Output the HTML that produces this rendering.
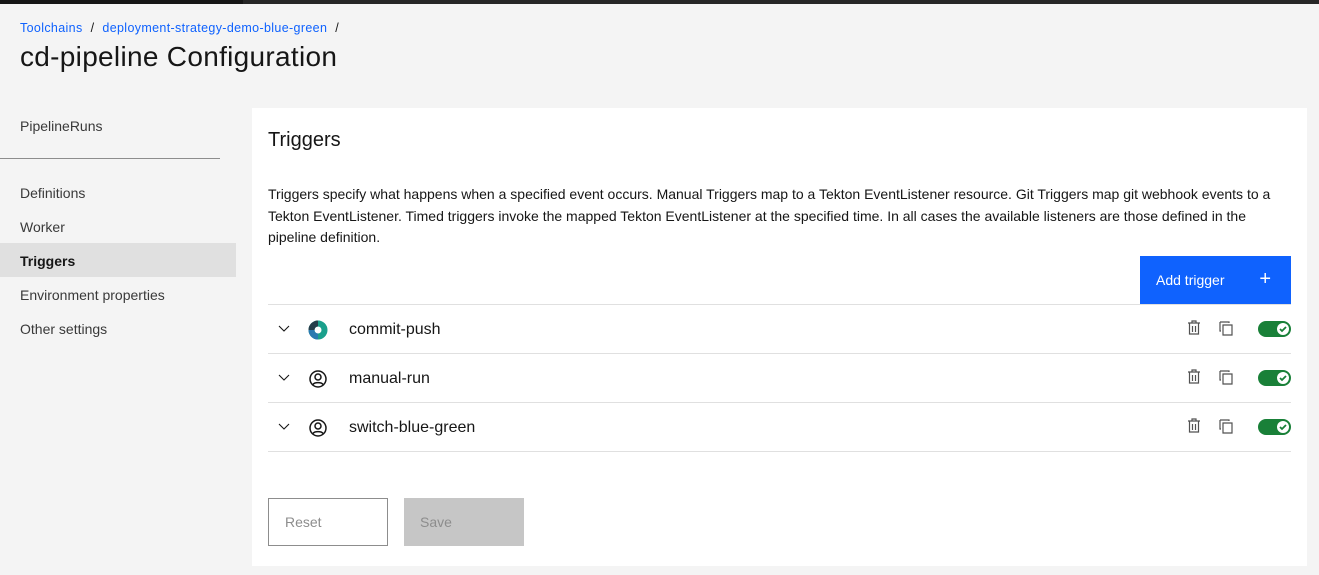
<!DOCTYPE html>
<html><head><style>
body{margin:0;width:1319px;height:575px;background:#f4f4f4;font-family:"Liberation Sans",sans-serif;color:#161616;position:relative;overflow:hidden}
.a{position:absolute}
.top{top:0;left:0;width:1319px;height:4px;background:#262626}
.top2{top:0;left:0;width:243px;height:4px;background:#161616}
.bc{top:21px;left:20px;font-size:12.5px;color:#0f62fe;letter-spacing:0.35px}
.bc span{color:#161616;margin:0 8px}
h1{position:absolute;top:41px;left:20px;margin:0;font-weight:400;font-size:28px;letter-spacing:0.3px}
.nav{left:20px;font-size:14px;color:#393939}
.panel{left:252px;top:108px;width:1055px;height:458px;background:#fff}
.row{left:268px;width:1023px;height:48px;border-top:1px solid #e0e0e0}
.row .n{position:absolute;left:81px;top:16px;font-size:16px}
</style></head><body>
<div class="a top"></div><div class="a top2"></div>
<div class="a bc">Toolchains<span>/</span>deployment-strategy-demo-blue-green<span>/</span></div>
<h1>cd-pipeline Configuration</h1>
<div class="a nav" style="top:118px">PipelineRuns</div>
<div class="a" style="top:158px;left:0;width:220px;height:1px;background:#8d8d8d"></div>
<div class="a nav" style="top:185px">Definitions</div>
<div class="a nav" style="top:219px">Worker</div>
<div class="a" style="top:243px;left:0;width:236px;height:34px;background:#e0e0e0"></div>
<div class="a nav" style="top:253px;font-weight:bold;color:#161616">Triggers</div>
<div class="a nav" style="top:287px">Environment properties</div>
<div class="a nav" style="top:321px">Other settings</div>
<div class="a panel"></div>
<div class="a" style="left:268px;top:129px;font-size:20px">Triggers</div>
<div class="a" style="left:268px;top:184px;width:1030px;font-size:14px;line-height:21.5px">Triggers specify what happens when a specified event occurs. Manual Triggers map to a Tekton EventListener resource. Git Triggers map git webhook events to a Tekton EventListener. Timed triggers invoke the mapped Tekton EventListener at the specified time. In all cases the available listeners are those defined in the pipeline definition.</div>
<div class="a" style="left:1140px;top:256px;width:151px;height:48px;background:#0f62fe;color:#fff;font-size:14px"><span style="position:absolute;left:16px;top:16px">Add trigger</span><span style="position:absolute;right:20px;top:12px;font-size:20px;font-weight:300">+</span></div>
<div class="a row" style="top:304px"><svg class="a" style="left:10px;top:20px" width="12" height="8"><path d="M1 1l5 5 5-5" stroke="#161616" fill="none" stroke-width="1.1"/></svg><svg class="a" style="left:40px;top:15px" width="20" height="20"><circle cx="10" cy="10" r="6.5" fill="none" stroke="#1aa08c" stroke-width="6"/><path d="M10 3.5a6.5 6.5 0 0 0-6.5 6.5" stroke="#263d4a" stroke-width="6" fill="none"/><path d="M3.5 10a6.5 6.5 0 0 0 6.5 6.5" stroke="#2a7ab0" stroke-width="6" fill="none"/></svg><span class="n">commit-push</span></div>
<div class="a row" style="top:353px"><svg class="a" style="left:10px;top:20px" width="12" height="8"><path d="M1 1l5 5 5-5" stroke="#161616" fill="none" stroke-width="1.1"/></svg><svg class="a" style="left:40px;top:15px" width="20" height="20"><circle cx="10" cy="10" r="8" fill="none" stroke="#161616" stroke-width="1.5"/><circle cx="10" cy="8" r="3" fill="none" stroke="#161616" stroke-width="1.5"/><path d="M5 15.5c1.5-2.5 8.5-2.5 10 0" stroke="#161616" fill="none" stroke-width="1.5"/></svg><span class="n">manual-run</span></div>
<div class="a row" style="top:402px;border-bottom:1px solid #e0e0e0"><svg class="a" style="left:10px;top:20px" width="12" height="8"><path d="M1 1l5 5 5-5" stroke="#161616" fill="none" stroke-width="1.1"/></svg><svg class="a" style="left:40px;top:15px" width="20" height="20"><circle cx="10" cy="10" r="8" fill="none" stroke="#161616" stroke-width="1.5"/><circle cx="10" cy="8" r="3" fill="none" stroke="#161616" stroke-width="1.5"/><path d="M5 15.5c1.5-2.5 8.5-2.5 10 0" stroke="#161616" fill="none" stroke-width="1.5"/></svg><span class="n">switch-blue-green</span></div>
<svg class="a" style="left:1186px;top:320px" width="110" height="120">
<g stroke="#525252" fill="none" stroke-width="1.2">
<path d="M2 3h12M6 3V1h4v2M3.5 3v11h9V3M6.5 6v6M9.5 6v6"/>
<path d="M34 2h9v1M34 2v9h1M37 5h9v10h-9z"/>
</g>
<rect x="72" y="1" width="33" height="16" rx="8" fill="#198038"/><circle cx="97" cy="9" r="6" fill="#fff"/><path d="M94 9l2 2 4-4" stroke="#198038" stroke-width="1.8" fill="none"/>
<g transform="translate(0,49)" stroke="#525252" fill="none" stroke-width="1.2"><path d="M2 3h12M6 3V1h4v2M3.5 3v11h9V3M6.5 6v6M9.5 6v6"/><path d="M34 2h9v1M34 2v9h1M37 5h9v10h-9z"/></g>
<g transform="translate(0,49)"><rect x="72" y="1" width="33" height="16" rx="8" fill="#198038"/><circle cx="97" cy="9" r="6" fill="#fff"/><path d="M94 9l2 2 4-4" stroke="#198038" stroke-width="1.8" fill="none"/></g>
<g transform="translate(0,98)" stroke="#525252" fill="none" stroke-width="1.2"><path d="M2 3h12M6 3V1h4v2M3.5 3v11h9V3M6.5 6v6M9.5 6v6"/><path d="M34 2h9v1M34 2v9h1M37 5h9v10h-9z"/></g>
<g transform="translate(0,98)"><rect x="72" y="1" width="33" height="16" rx="8" fill="#198038"/><circle cx="97" cy="9" r="6" fill="#fff"/><path d="M94 9l2 2 4-4" stroke="#198038" stroke-width="1.8" fill="none"/></g>
</svg>
<div class="a" style="left:268px;top:498px;width:118px;height:46px;border:1px solid #8d8d8d;font-size:14px;color:#8d8d8d"><span style="position:absolute;left:16px;top:15px">Reset</span></div>
<div class="a" style="left:404px;top:498px;width:120px;height:48px;background:#c6c6c6;font-size:14px;color:#8d8d8d"><span style="position:absolute;left:16px;top:16px">Save</span></div>
</body></html>
